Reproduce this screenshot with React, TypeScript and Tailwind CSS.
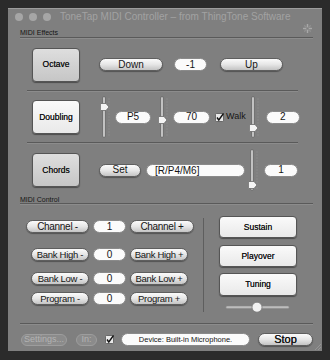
import React from "react";

const font = { fontFamily: '"Liberation Sans", Arial, sans-serif' };

const Pill: React.FC<{ w: string; children: React.ReactNode; className?: string }> = ({
  w,
  children,
  className = "",
}) => (
  <div
    className={`${w} h-[13px] rounded-full bg-gradient-to-b from-[#fbfbfb] via-[#e6e6e6] to-[#c4c4c4] border border-[#5e5e5e] shadow-[0_1px_1px_rgba(0,0,0,0.35)] flex items-center justify-center leading-none text-[#151515] whitespace-nowrap ${className}`}
  >
    {children}
  </div>
);

const Field: React.FC<{ w: string; children: React.ReactNode; className?: string }> = ({
  w,
  children,
  className = "",
}) => (
  <div
    className={`${w} h-[13px] rounded-full bg-[#fbfbfb] border border-[#8a8a8a] flex items-center justify-center text-[10px] leading-none text-[#151515] ${className}`}
  >
    {children}
  </div>
);

const BigButton: React.FC<{ label: string; light?: boolean; className?: string }> = ({
  label,
  light,
  className = "",
}) => (
  <div
    className={`rounded-[4px] border border-[#555] shadow-[0_1px_1px_rgba(0,0,0,0.4)] flex items-center justify-center text-[8.5px] text-[#111] [text-shadow:0_0_0.2px_#333] ${
      light
        ? "bg-gradient-to-b from-[#fafafa] to-[#e9e9e9]"
        : "bg-gradient-to-b from-[#dedede] to-[#c6c6c6]"
    } ${className}`}
  >
    {label}
  </div>
);

// vertical slider with right-pointing thumb
const VSlider: React.FC<{ thumb: number; className?: string }> = ({ thumb, className = "" }) => (
  <svg width="12" height="42" viewBox="0 0 12 42" className={className}>
    {Array.from({ length: 13 }).map((_, i) => (
      <line key={i} x1="8" x2="10" y1={3 + i * 3} y2={3 + i * 3} stroke="#8e8e8e" strokeWidth="0.8" />
    ))}
    <rect x="2.5" y="0.5" width="3" height="41" rx="1.5" fill="#c2c2c2" stroke="#666" strokeWidth="0.8" />
    <path
      d={`M1 ${thumb - 3.5} h5 l3 3.5 l-3 3.5 h-5 q-0.6 0 -0.6 -0.6 v-5.8 q0 -0.6 0.6 -0.6 z`}
      fill="#f4f4f4"
      stroke="#6a6a6a"
      strokeWidth="0.8"
    />
  </svg>
);

const Check: React.FC<{ className?: string }> = ({ className = "" }) => (
  <svg width="9" height="9" viewBox="0 0 9 9" className={className}>
    <rect x="0.5" y="0.5" width="8" height="8" rx="1" fill="#e9e9e9" stroke="#555" strokeWidth="0.8" />
    <path d="M2 4.5 L3.8 7 L8.5 0.5" fill="none" stroke="#111" strokeWidth="1.4" />
  </svg>
);

const Spinner = () => (
  <svg width="9" height="9" viewBox="0 0 10 10">
    {Array.from({ length: 8 }).map((_, i) => {
      const a = (i * Math.PI) / 4;
      return (
        <line
          key={i}
          x1={5 + Math.cos(a) * 2}
          y1={5 + Math.sin(a) * 2}
          x2={5 + Math.cos(a) * 4.5}
          y2={5 + Math.sin(a) * 4.5}
          stroke={i % 2 ? "#8f8f8f" : "#a8a8a8"}
          strokeWidth="1.6"
          strokeLinecap="round"
        />
      );
    })}
  </svg>
);

const Etched: React.FC<{ className?: string }> = ({ className = "" }) => (
  <div className={`h-[2px] border-t border-[#5a5a5a] border-b border-b-[#8c8c8c] ${className}`} />
);

const CtlRow: React.FC<{ minus: string; plus: string; value: string; wide?: boolean; className?: string }> = ({
  minus,
  plus,
  value,
  wide,
  className = "",
}) => (
  <div className={`flex items-center gap-[4px] ${className}`}>
    <div className="w-[63px] flex justify-end">
      <Pill
        w={wide ? "w-[63px]" : "w-[58px]"}
        className={wide ? "text-[10px] tracking-[-0.3px]" : "text-[9.5px] tracking-[-0.3px]"}
      >
        {minus}
      </Pill>
    </div>
    <Field w="w-[33px]">{value}</Field>
    <Pill
      w={wide ? "w-[64px]" : "w-[58px]"}
      className={wide ? "text-[10px] tracking-[-0.3px]" : "text-[9.5px] tracking-[-0.3px]"}
    >
      {plus}
    </Pill>
  </div>
);

export default function App() {
  return (
    <div className="w-[330px] h-[360px] bg-[#2b2b2b] pt-[8px] pl-[8px]" style={font}>
      <div className="relative w-[314px] h-[343px] bg-[#7f7f7f] border-t border-[#9c9c9c] flex flex-col">
        {/* title bar */}
        <div className="h-[15px] flex items-center pl-[7px]">
          <div className="flex gap-[6px]">
            <div className="w-[8px] h-[8px] rounded-full bg-[#a6a6a6]" />
            <div className="w-[8px] h-[8px] rounded-full bg-[#a6a6a6]" />
            <div className="w-[8px] h-[8px] rounded-full bg-[#a6a6a6]" />
          </div>
          <div className="ml-[9px] text-[10px] text-[#a2a2a2] whitespace-nowrap">
            ToneTap MIDI Controller – from ThingTone Software
          </div>
        </div>

        {/* MIDI Effects header */}
        <div className="relative mt-[4px] ml-[12px] w-[293px] h-[9px] text-[7px] leading-[9px] text-[#151515]">
          MIDI Effects
          <div className="absolute right-[1px] top-[-4px]">
            <Spinner />
          </div>
        </div>
        <Etched className="ml-[12px] w-[293px]" />

        {/* Octave row */}
        <div className="h-[51px] flex items-center pl-[24px]">
          <BigButton label="Octave" className="w-[48px] h-[34px]" />
          <Pill w="w-[64px]" className="ml-[19px] text-[10px]">Down</Pill>
          <Field w="w-[33px]" className="ml-[11px]">-1</Field>
          <Pill w="w-[63px]" className="ml-[13px] text-[10px]">Up</Pill>
        </div>
        <Etched className="ml-[19px] w-[271px]" />

        {/* Doubling row */}
        <div className="h-[50px] flex items-center pl-[24px]">
          <BigButton label="Doubling" light className="w-[48px] h-[34px]" />
          <VSlider thumb={11} className="ml-[20px]" />
          <Field w="w-[36px]" className="ml-[3px]">P5</Field>
          <VSlider thumb={24} className="ml-[7px]" />
          <Field w="w-[37px]" className="ml-[3px]">70</Field>
          <Check className="ml-[5px]" />
          <span className="ml-[2px] text-[9px] text-[#151515]">Walk</span>
          <VSlider thumb={32} className="ml-[3px]" />
          <Field w="w-[34px]" className="ml-[5px]">2</Field>
        </div>
        <Etched className="ml-[19px] w-[271px]" />

        {/* Chords row */}
        <div className="h-[52px] flex items-center pl-[24px]">
          <BigButton label="Chords" className="w-[48px] h-[34px]" />
          <Pill w="w-[42px]" className="ml-[19px] text-[10px]">Set</Pill>
          <div className="ml-[5px] w-[99px] h-[13px] rounded-full bg-[#fbfbfb] border border-[#8a8a8a] flex items-center pl-[8px] text-[10px] text-[#151515]">
            [R/P4/M6]
          </div>
          <VSlider thumb={36} className="ml-[3px]" />
          <Field w="w-[34px]" className="ml-[4px]">1</Field>
        </div>

        {/* MIDI Control header */}
        <div className="ml-[12px] w-[293px] h-[7px] text-[7px] leading-[7px] text-[#151515]">MIDI Control</div>
        <Etched className="ml-[12px] w-[293px]" />

        {/* control area */}
        <div className="h-[118px] flex pl-[18px]">
          <div className="w-[168px] flex flex-col">
            <CtlRow minus="Channel -" plus="Channel +" value="1" wide className="mt-[15px]" />
            <CtlRow minus="Bank High -" plus="Bank High +" value="0" className="mt-[15px]" />
            <CtlRow minus="Bank Low -" plus="Bank Low +" value="0" className="mt-[11px]" />
            <CtlRow minus="Program -" plus="Program +" value="0" className="mt-[7px]" />
          </div>
          <div className="ml-[9px] mt-[13px] w-px h-[94px] bg-[#5e5e5e]" />
          <div className="ml-[15px] flex flex-col">
            <BigButton label="Sustain" light className="mt-[11px] w-[78px] h-[22px]" />
            <BigButton label="Playover" light className="mt-[7px] w-[78px] h-[22px]" />
            <BigButton label="Tuning" light className="mt-[6px] w-[78px] h-[23px]" />
            <svg width="78" height="12" viewBox="0 0 78 12" className="mt-[5px]">
              <rect x="7" y="5" width="63" height="2.5" rx="1.2" fill="#bdbdbd" stroke="#888" strokeWidth="0.5" />
              <circle cx="38" cy="6.2" r="5" fill="#f2f2f2" stroke="#777" strokeWidth="0.8" />
            </svg>
          </div>
        </div>
        <Etched className="ml-[12px] w-[293px]" />

        {/* bottom row */}
        <div className="mt-[8px] flex items-center pl-[13px]">
          <div className="w-[46px] h-[12px] rounded-full bg-[#8b8b8b] border border-[#9d9d9d] flex items-center justify-center text-[9px] text-[#b3b3b3]">
            Settings...
          </div>
          <div className="ml-[9px] w-[21px] h-[12px] rounded-full bg-[#8b8b8b] border border-[#9d9d9d] flex items-center justify-center text-[9px] text-[#b3b3b3]">
            In:
          </div>
          <Check className="ml-[8px]" />
          <div className="ml-[7px] w-[129px] h-[13px] rounded-full bg-[#fbfbfb] border border-[#8a8a8a] flex items-center justify-center text-[7.5px] text-[#151515]">
            Device: Built-in Microphone.
          </div>
          <Pill w="w-[55px]" className="ml-[8px] text-[11px] [text-shadow:0_0_0.5px_#111]">
            Stop
          </Pill>
        </div>

        {/* resize grip */}
        <svg width="8" height="8" viewBox="0 0 8 8" className="absolute right-[1px] bottom-[1px]">
          <path d="M2 8 L8 2 M5 8 L8 5" stroke="#9a9a9a" strokeWidth="0.8" />
        </svg>
      </div>
    </div>
  );
}
